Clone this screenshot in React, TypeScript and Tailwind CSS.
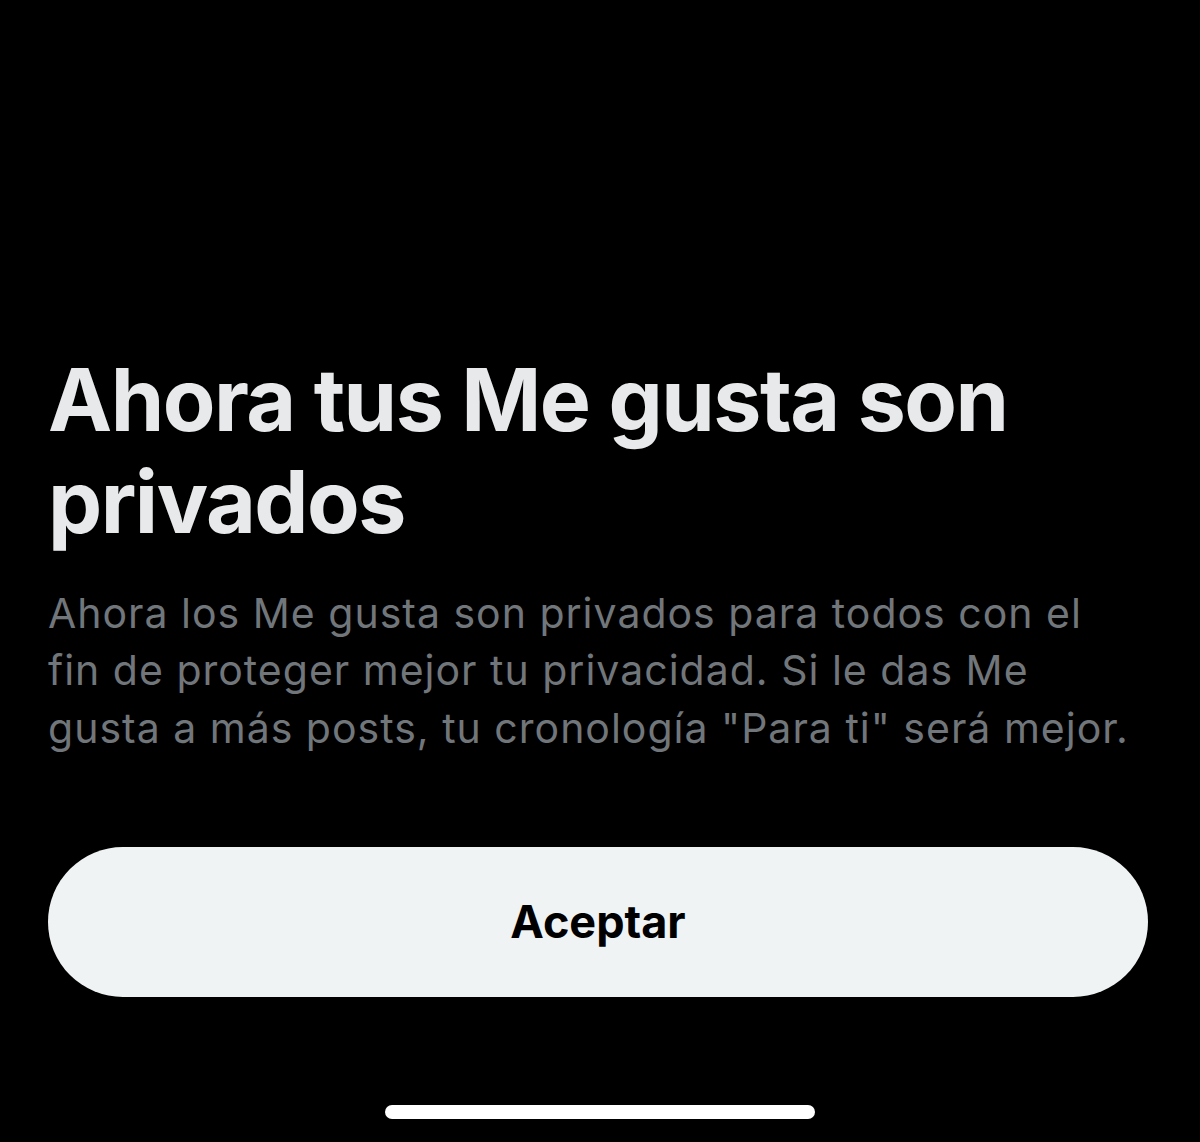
export default function App() {
  return (
    <div
      className="w-[1200px] h-[1142px] bg-black flex flex-col"
      style={{ fontFamily: 'Inter, "Noto Sans", sans-serif' }}
    >
      <div className="flex-1 flex flex-col justify-end pl-[48px] pr-[52px]">
        <h1 className="text-[#e7e9ea] text-[86px] leading-[102px] font-bold tracking-[-1.5px]">
          <span className="block whitespace-nowrap">Ahora tus Me gusta son</span>
          <span className="block whitespace-nowrap">privados</span>
        </h1>
        <p className="mt-[32px] text-[#71767b] text-[41px] leading-[57.5px] tracking-[1px]">
          <span className="block whitespace-nowrap">Ahora los Me gusta son privados para todos con el</span>
          <span className="block whitespace-nowrap">fin de proteger mejor tu privacidad. Si le das Me</span>
          <span className="block whitespace-nowrap">gusta a más posts, tu cronología "Para ti" será mejor.</span>
        </p>
        <button className="mt-[90px] h-[150px] w-full rounded-full bg-[#eff3f4] text-black text-[45px] font-bold">
          Aceptar
        </button>
      </div>
      <div className="h-[145px] flex items-start justify-center pt-[108px]">
        <div className="w-[430px] h-[14px] rounded-full bg-white" />
      </div>
    </div>
  );
}
